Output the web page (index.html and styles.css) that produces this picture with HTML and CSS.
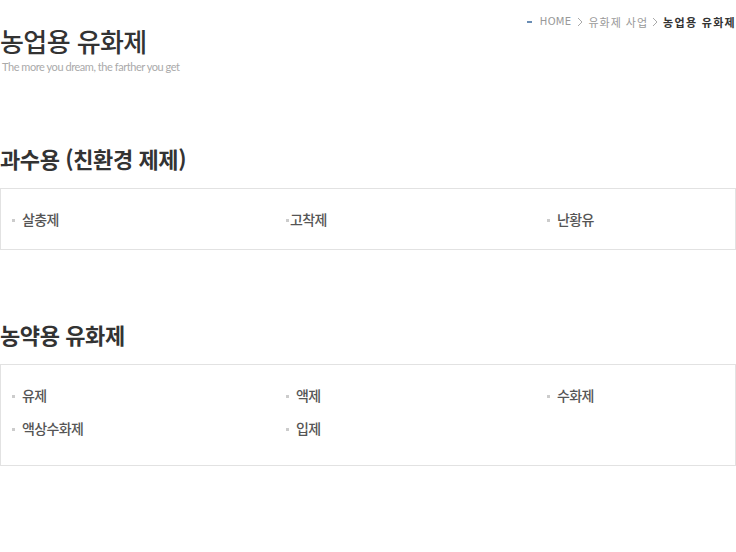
FILE: index.html
```html
<!DOCTYPE html>
<html lang="ko">
<head>
    <meta charset="UTF-8">
    <meta name="viewport" content="width=device-width, initial-scale=1.0">
    <title>농업용 유화제</title>
    <link rel="stylesheet" href="styles.css">
</head>
<body>

    <!-- Page Header -->
    <header class="page-head">
        <div class="page-title">
            <h1>농업용 유화제</h1>
            <p class="slogan">The more you dream, the farther you get</p>
        </div>
        <div class="location">
            <span class="loc-dash"></span>
            <span class="loc-home">HOME</span>
            <svg class="loc-arrow" width="6" height="10" viewBox="0 0 6 10"><path d="M1 1l4 4-4 4" fill="none" stroke="#aaa" stroke-width="1"/></svg>
            <span class="loc-item">유화제 사업</span>
            <svg class="loc-arrow" width="6" height="10" viewBox="0 0 6 10"><path d="M1 1l4 4-4 4" fill="none" stroke="#aaa" stroke-width="1"/></svg>
            <strong>농업용 유화제</strong>
        </div>
    </header>

    <!-- Fruit Trees -->
    <section class="product-group first">
        <h2>과수용 (친환경 제제)</h2>
        <ul class="product-list">
            <li>살충제</li>
            <li class="tight">고착제</li>
            <li>난황유</li>
        </ul>
    </section>

    <!-- Pesticides -->
    <section class="product-group">
        <h2>농약용 유화제</h2>
        <ul class="product-list tall">
            <li>유제</li>
            <li>액제</li>
            <li>수화제</li>
            <li>액상수화제</li>
            <li>입제</li>
        </ul>
    </section>

</body>
</html>
```

FILE: styles.css
```css
/* General Styles */
body {
    font-family: "Noto Sans CJK KR", "Noto Sans", sans-serif;
    margin: 0;
    padding: 0;
    background-color: #fff;
    color: #333;
    width: 736px;
}

/* Header */
.page-head {
    display: flex;
    justify-content: space-between;
    align-items: flex-start;
    height: 110px;
}

.page-title h1 {
    margin: 23px 0 0 0;
    font-size: 26px;
    font-weight: 500;
    letter-spacing: -0.6px;
    line-height: 36px;
    color: #333;
}

.page-title .slogan {
    margin: 1px 0 0 0;
    font-family: "Lato", sans-serif;
    font-size: 11px;
    letter-spacing: -0.45px;
    color: #aaa;
    line-height: 14px;
    padding-left: 2px;
}

.location {
    display: flex;
    align-items: center;
    gap: 4px;
    margin-top: 14px;
    font-size: 11px;
    color: #999;
    line-height: 16px;
}

.loc-dash {
    width: 5px;
    height: 2px;
    background-color: #6a8db4;
    margin-right: 4px;
}

.loc-home {
    font-family: "DejaVu Sans", sans-serif;
    font-size: 10px;
    letter-spacing: 0.3px;
    margin-right: 2px;
}

.loc-arrow {
    margin-right: 1px;
}

.loc-item {
    letter-spacing: 1px;
}

.location strong {
    color: #333;
    font-weight: 700;
    letter-spacing: 1.3px;
}

/* Product Groups */
.product-group h2 {
    margin: 0;
    font-size: 22px;
    font-weight: 700;
    letter-spacing: -0.4px;
    line-height: 30px;
    color: #333;
}

.product-group.first {
    margin-top: 33px;
}

.product-group + .product-group {
    margin-top: 69px;
}

.product-list {
    list-style: none;
    margin: 15px 0 0 0;
    padding: 20px 0 19px 10px;
    border: 1px solid #e2e2e2;
    display: grid;
    grid-template-columns: 274px 261px 1fr;
    row-gap: 12px;
}

.product-list.tall {
    padding-bottom: 26px;
}

.product-list li {
    position: relative;
    padding-left: 11px;
    font-size: 14px;
    font-weight: 500;
    line-height: 21px;
    letter-spacing: -0.6px;
    color: #555;
}

.product-list li::before {
    content: "";
    position: absolute;
    left: 1px;
    top: 10px;
    width: 3px;
    height: 3px;
    background-color: #ccc;
}

.product-list li.tight {
    padding-left: 5px;
}
```
